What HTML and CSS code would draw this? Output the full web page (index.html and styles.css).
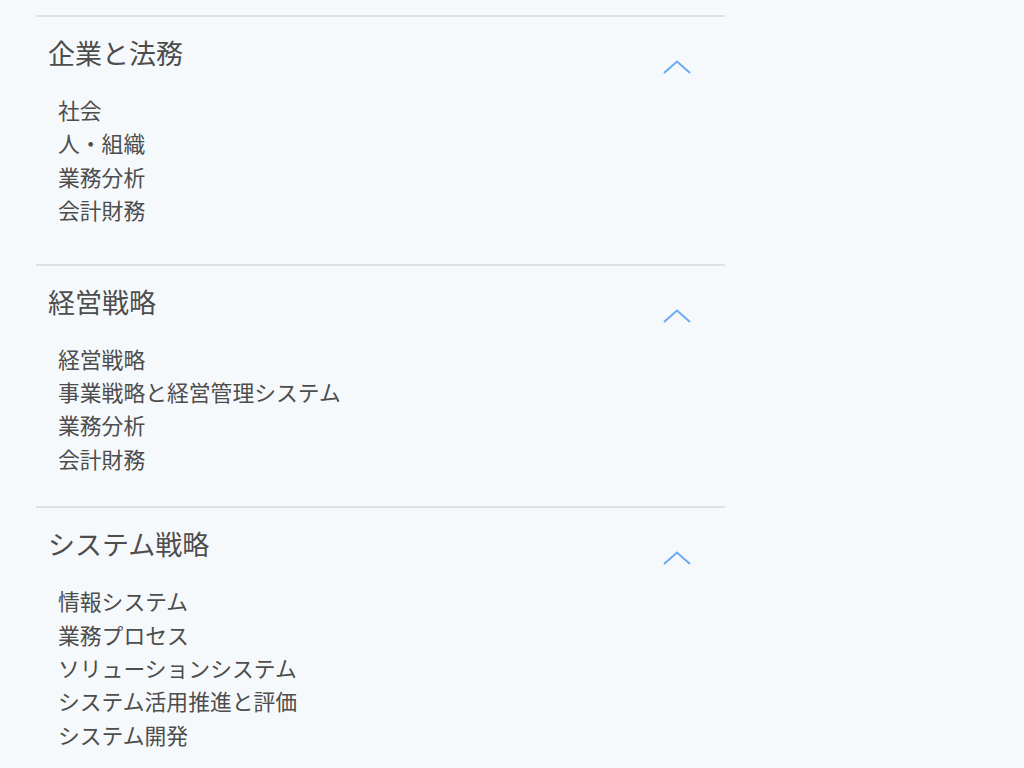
FILE: index.html
```html
<!DOCTYPE html>
<html lang="ja">
<head>
<meta charset="utf-8">
<title>カテゴリ</title>
<link rel="stylesheet" href="styles.css">
</head>
<body>
<div class="list">
  <section class="group group--first">
    <div class="group-head">
      <h2 class="group-title">企業と法務</h2>
      <svg class="chevron" width="28" height="14" viewBox="0 0 28 14"><polyline points="1,13 14,1.5 27,13" fill="none" stroke="#6aa9f4" stroke-width="2"/></svg>
    </div>
    <ul class="items">
      <li>社会</li>
      <li>人・組織</li>
      <li>業務分析</li>
      <li>会計財務</li>
    </ul>
  </section>
  <section class="group">
    <div class="group-head">
      <h2 class="group-title">経営戦略</h2>
      <svg class="chevron" width="28" height="14" viewBox="0 0 28 14"><polyline points="1,13 14,1.5 27,13" fill="none" stroke="#6aa9f4" stroke-width="2"/></svg>
    </div>
    <ul class="items">
      <li>経営戦略</li>
      <li>事業戦略と経営管理システム</li>
      <li>業務分析</li>
      <li>会計財務</li>
    </ul>
  </section>
  <section class="group">
    <div class="group-head">
      <h2 class="group-title">システム戦略</h2>
      <svg class="chevron" width="28" height="14" viewBox="0 0 28 14"><polyline points="1,13 14,1.5 27,13" fill="none" stroke="#6aa9f4" stroke-width="2"/></svg>
    </div>
    <ul class="items">
      <li>情報システム</li>
      <li>業務プロセス</li>
      <li>ソリューションシステム</li>
      <li>システム活用推進と評価</li>
      <li>システム開発</li>
    </ul>
  </section>
</div>
</body>
</html>
```
FILE: styles.css
```css
html, body {
  margin: 0;
  padding: 0;
  background: #f6f9fb;
  height: 100%;
  overflow: hidden;
}
body {
  font-family: "Noto Sans CJK JP", "Noto Sans", sans-serif;
  color: #4d4d4d;
}
.list {
  margin-left: 36px;
  width: 689px;
  padding-top: 15px;
}
.group {
  border-top: 2px solid #dfe2e5;
  padding: 18px 0 31px;
}
.group--first {
  padding-bottom: 37px;
}
.group-head {
  display: flex;
  justify-content: space-between;
  align-items: flex-start;
  padding-left: 12px;
  padding-right: 34px;
}
.group-title {
  margin: 0;
  font-size: 27px;
  font-weight: 400;
  line-height: 36px;
}
.chevron {
  display: block;
  margin-top: 25px;
}
.items {
  list-style: none;
  margin: 19px 0 0;
  padding: 0 0 0 22px;
  font-size: 21.8px;
  line-height: 33.4px;
}
```
